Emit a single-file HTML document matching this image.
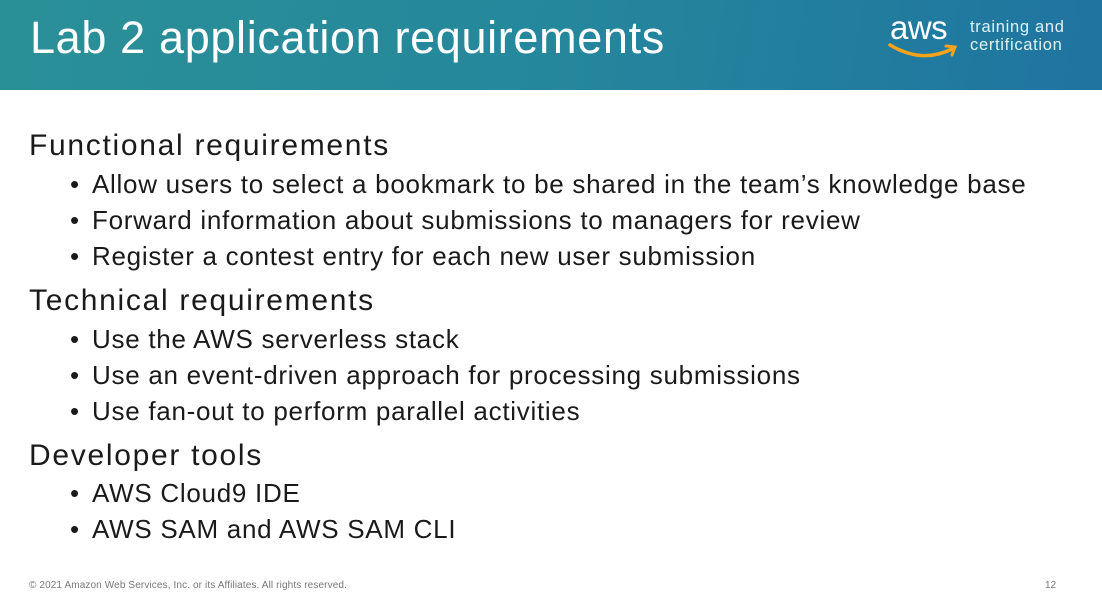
<!DOCTYPE html>
<html><head><meta charset="utf-8"><style>
*{margin:0;padding:0;box-sizing:border-box}
body{width:1102px;height:601px;background:#fff;font-family:"Liberation Sans",sans-serif;position:relative;overflow:hidden;color:#1a1a1a}
.hdr{position:absolute;left:0;top:0;width:1102px;height:90px;background:linear-gradient(100deg,#2a9097 0%,#25879c 50%,#1f74a0 100%)}
.title{position:absolute;left:30px;top:12px;font-size:45px;color:#fff;font-weight:300;letter-spacing:0.65px}
.aws{position:absolute;left:890px;top:9px;color:#fff;font-size:33px;letter-spacing:-0.5px}
.tc{position:absolute;left:970px;top:18px;color:#dff2f5;font-size:16.5px;line-height:18px;letter-spacing:0.7px}
.h{position:absolute;left:29px;font-size:30px;letter-spacing:1.7px}
.b{position:absolute;left:70px;font-size:26px;letter-spacing:0.72px}
.b:before{content:"•";position:absolute;left:0}
.b span{margin-left:22px}
.foot{position:absolute;left:29px;top:580px;font-size:10px;color:#777;letter-spacing:0.12px}
.pg{position:absolute;left:1045px;top:580px;font-size:10px;color:#777}
</style></head><body>
<div class="hdr"></div>
<div class="title">Lab 2 application requirements</div>
<div class="aws">aws</div>
<svg style="position:absolute;left:888px;top:42px" width="72" height="18" viewBox="0 0 72 18"><path d="M2 3 Q34 22 64 7" stroke="#f7a21b" stroke-width="3.5" fill="none" stroke-linecap="round"/><path d="M58 4 L67 5 L64 13" stroke="#f7a21b" stroke-width="3" fill="none" stroke-linecap="round"/></svg>
<div class="tc">training and<br>certification</div>
<div class="h" style="top:129px">Functional requirements</div>
<div class="b" style="top:169px"><span>Allow users to select a bookmark to be shared in the team’s knowledge base</span></div>
<div class="b" style="top:205px"><span>Forward information about submissions to managers for review</span></div>
<div class="b" style="top:241px"><span>Register a contest entry for each new user submission</span></div>
<div class="h" style="top:284px">Technical requirements</div>
<div class="b" style="top:324px"><span>Use the AWS serverless stack</span></div>
<div class="b" style="top:360px"><span>Use an event-driven approach for processing submissions</span></div>
<div class="b" style="top:396px"><span>Use fan-out to perform parallel activities</span></div>
<div class="h" style="top:439px">Developer tools</div>
<div class="b" style="top:478px"><span>AWS Cloud9 IDE</span></div>
<div class="b" style="top:514px"><span>AWS SAM and AWS SAM CLI</span></div>
<div class="foot">© 2021 Amazon Web Services, Inc. or its Affiliates. All rights reserved.</div>
<div class="pg">12</div>
</body></html>
